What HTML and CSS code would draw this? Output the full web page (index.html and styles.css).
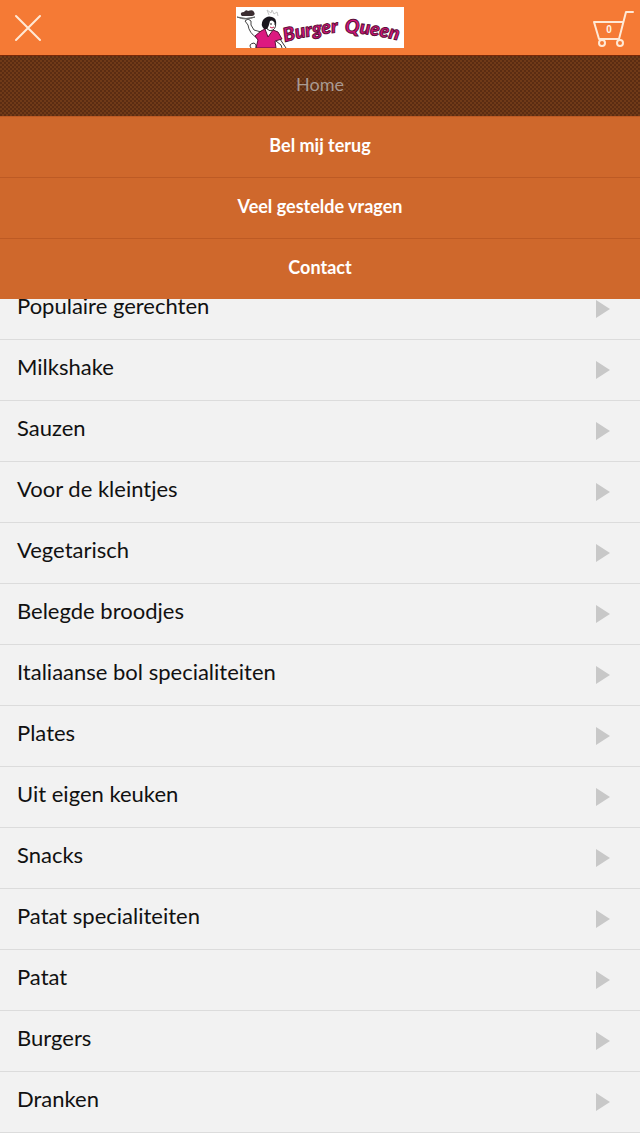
FILE: index.html
```html
<!DOCTYPE html>
<html lang="nl">
<head>
    <meta charset="UTF-8">
    <meta name="viewport" content="width=device-width, initial-scale=1.0">
    <title>Burger Queen</title>
    <link rel="stylesheet" href="styles.css">
</head>
<body>
    <header class="header">
        <button type="button" class="close-button" aria-label="Menu sluiten">
            <svg width="28" height="28" viewBox="0 0 28 28" fill="none" stroke="#ffe9d6" stroke-width="2" stroke-linecap="round">
                <path d="M2 2L26 26M26 2L2 26"/>
            </svg>
        </button>

        <a href="#" class="logo" aria-label="Burger Queen">
            <svg width="168" height="41" viewBox="0 0 168 41">
                <rect width="168" height="41" fill="#fff"/>
                <!-- dienblad met burger -->
                <path d="M1 10Q10 13 19 10Q10 14 1 10Z" fill="#ccc" stroke="#666" stroke-width="1"/>
                <path d="M5 8Q4 5 8 5Q10 2 12 4Q17 2 18 5Q20 8 16 9H6Z" fill="#3b2d31"/>
                <!-- arm -->
                <path d="M9 14L12 12L15 14L15 18L18 23L25 25L21 31Q13 26 12 18Z" fill="#fff" stroke="#444" stroke-width="1"/>
                <!-- jurk -->
                <path d="M19 29L25 24L29 22L33 26L37 23L42 25L46 32L39 34L40 41H20L22 33Z" fill="#dc1a80" stroke="#5b1038" stroke-width="1"/>
                <path d="M29 22L32 30L37 23" fill="#fff" stroke="#5b1038" stroke-width="1"/>
                <path d="M40 34L45 38L46 41M44 32L50 41M15 41Q12 37 18 36Q21 37 20 41" fill="none" stroke="#333" stroke-width="1"/>
                <!-- hoofd -->
                <path d="M31 13Q36 10 39 14Q41 20 37 23Q34 25 31 22Z" fill="#fff" stroke="#333" stroke-width="1"/>
                <path d="M28 22Q24 18 27 13Q31 8 36 10Q41 11 40 18Q37 12 34 14Q33 19 31 22Z" fill="#19151c"/>
                <path d="M34 17H36M38 17H39" stroke="#222" stroke-width="1"/>
                <path d="M34 20Q36 22 38 20" fill="none" stroke="#c01a4c" stroke-width="1"/>
                <path d="M33 8L31 3L35 6L36 3L38 7L41 5L42 9" fill="none" stroke="#c4c4c4" stroke-width="1"/>
                <path id="curve-left" d="M49 35Q78 27 116 24" fill="none"/>
                <path id="curve-right" d="M109 26Q138 26 180 38" fill="none"/>
                <text class="logo-text"><textPath href="#curve-left">Burger</textPath></text>
                <text class="logo-text"><textPath href="#curve-right">Queen</textPath></text>
            </svg>
        </a>

        <button type="button" class="cart-button" aria-label="Winkelwagen">
            <svg width="42" height="38" viewBox="0 0 42 38" fill="none" stroke="#ffe9d6" stroke-width="2">
                <path d="M41 3H34L27 30H7L2 13H31" stroke-linejoin="round" stroke-linecap="round"/>
                <circle cx="10" cy="34" r="3"/>
                <circle cx="28" cy="34" r="3"/>
                <text class="cart-count" x="17" y="24">0</text>
            </svg>
        </button>

        <nav class="menu">
            <a href="#" class="menu-item active">Home</a>
            <a href="#" class="menu-item">Bel mij terug</a>
            <a href="#" class="menu-item">Veel gestelde vragen</a>
            <a href="#" class="menu-item">Contact</a>
        </nav>
    </header>

    <main class="content">
        <ul class="categories">
            <li><a href="#">Populaire gerechten</a></li>
            <li><a href="#">Milkshake</a></li>
            <li><a href="#">Sauzen</a></li>
            <li><a href="#">Voor de kleintjes</a></li>
            <li><a href="#">Vegetarisch</a></li>
            <li><a href="#">Belegde broodjes</a></li>
            <li><a href="#">Italiaanse bol specialiteiten</a></li>
            <li><a href="#">Plates</a></li>
            <li><a href="#">Uit eigen keuken</a></li>
            <li><a href="#">Snacks</a></li>
            <li><a href="#">Patat specialiteiten</a></li>
            <li><a href="#">Patat</a></li>
            <li><a href="#">Burgers</a></li>
            <li><a href="#">Dranken</a></li>
        </ul>
    </main>
</body>
</html>
```

FILE: styles.css
```css
* {
    box-sizing: border-box;
}

body {
    margin: 0;
    font-family: Lato, sans-serif;
    background: #fff;
}

a {
    color: inherit;
    text-decoration: none;
}

button {
    padding: 0;
    border: none;
    background: none;
    cursor: pointer;
}

svg {
    display: block;
}

.header {
    position: relative;
    display: flex;
    justify-content: space-between;
    align-items: center;
    height: 55px;
    background: #f57a35;
}

.close-button,
.cart-button {
    display: flex;
    width: 56px;
    justify-content: center;
}

.cart-button {
    justify-content: flex-end;
    padding-right: 6px;
}

.logo-text {
    font-size: 19px;
    font-weight: 900;
    font-style: italic;
    fill: #d8147c;
    stroke: #5b1038;
    stroke-width: 1px;
}

.cart-count {
    font-size: 10px;
    font-weight: bold;
    text-anchor: middle;
    fill: #fff3e6;
    stroke: none;
}

/* menu valt over de lijst heen */
.menu {
    position: absolute;
    top: 100%;
    left: 0;
    right: 0;
    background: #cf682c;
}

.menu-item {
    display: block;
    height: 61px;
    line-height: 56px;
    border-top: 1px solid #bd5a24;
    color: #fff;
    font-size: 18px;
    font-weight: bold;
    text-align: center;
}

.menu-item.active {
    border-top-color: #7c2806;
    background: repeating-conic-gradient(#5b2c12 0 25%, #703a18 0 50%) 0 0 / 4px 4px;
    color: #a99a92;
    font-weight: normal;
}

.content {
    padding-top: 224px;
}

.categories {
    margin: 0;
    padding: 0;
    list-style: none;
    background: #f2f2f2;
}

.categories a {
    display: flex;
    justify-content: space-between;
    align-items: center;
    height: 61px;
    padding: 0 30px 8px 17px;
    border-bottom: 1px solid #dcdcdc;
    color: #111;
    font-size: 22px;
}

.categories a::after {
    content: "";
    margin-top: 8px;
    border: 9px solid transparent;
    border-left: 14px solid #c8c8c8;
    border-right: none;
}
```
